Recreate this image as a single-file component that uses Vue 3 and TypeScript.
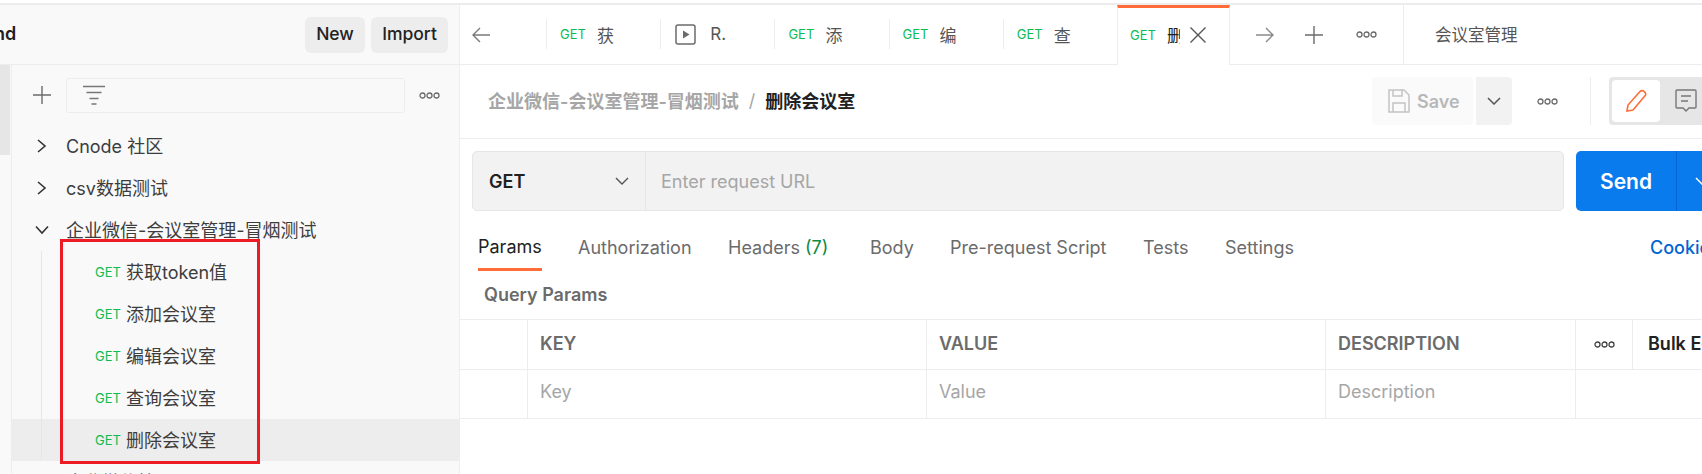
<script setup lang="ts">
interface Tab { label: string; active?: boolean; runner?: boolean }
const tabs: Tab[] = [
  { label: '获' },
  { label: 'R.', runner: true },
  { label: '添' },
  { label: '编' },
  { label: '查' },
  { label: '删', active: true },
]
const collections = ['Cnode 社区', 'csv数据测试']
const requests = ['获取token值', '添加会议室', '编辑会议室', '查询会议室', '删除会议室']
const reqTabs = ['Authorization']
const cols = ['KEY', 'VALUE', 'DESCRIPTION']
const placeholders = ['Key', 'Value', 'Description']
</script>

<template>
  <div class="app">
    <div class="topline"></div>
    <div class="body">
      <aside class="side">
        <header class="side-head">
          <span class="side-title">nd</span>
          <div class="side-btns">
            <button class="btn new">New</button>
            <button class="btn imp">Import</button>
          </div>
        </header>
        <div class="side-main">
          <div class="rail"><div class="rail-item"></div></div>
          <div class="tree-panel">
            <div class="tools">
              <svg class="plus" width="18" height="18" viewBox="0 0 18 18"><path d="M9 0v18M0 9h18" stroke="#6b6b6b" stroke-width="1.4" fill="none"/></svg>
              <div class="filter">
                <svg width="22" height="20" viewBox="0 0 22 20"><path d="M0 1.5h22M3.5 7.5h15M6.5 13.500h9M8.500 19h5" stroke="#777" stroke-width="1.4" fill="none"/></svg>
              </div>
              <svg class="dots" width="21" height="7" viewBox="0 0 21 7"><g fill="none" stroke="#6b6b6b" stroke-width="1.300"><circle cx="3.500" cy="3.500" r="2.500"/><circle cx="10.500" cy="3.500" r="2.500"/><circle cx="17.500" cy="3.500" r="2.500"/></g></svg>
            </div>
            <div v-for="c in collections" :key="c" class="row coll">
              <svg class="chev" width="10" height="14" viewBox="0 0 10 14"><path d="M1 1l7 6-7 6" fill="none" stroke="#333" stroke-width="1.600"/></svg>
              <span>{{ c }}</span>
            </div>
            <div class="row coll open">
              <svg class="chev" width="14" height="10" viewBox="0 0 14 10"><path d="M1 1.500l6 6.500 6-6.500" fill="none" stroke="#333" stroke-width="1.600"/></svg>
              <span>企业微信-会议室管理-冒烟测试</span>
            </div>
            <div v-for="(r, i) in requests" :key="r" class="row req" :class="{ sel: i === 4 }">
              <span class="guide"></span>
              <span class="get">GET</span>
              <span>{{ r }}</span>
            </div>
            <div class="row coll">
              <span>企业微信接口</span>
            </div>
          </div>
        </div>
        <div class="redbox"></div>
      </aside>

      <main class="main">
        <div class="tabbar">
          <svg class="back" width="18" height="16" viewBox="0 0 18 16"><path d="M18 8H1M8 1L1 8l7 7" fill="none" stroke="#7a7a7a" stroke-width="1.400"/></svg>
          <div v-for="t in tabs" :key="t.label" class="tab" :class="{ active: t.active, runner: t.runner }">
            <template v-if="t.runner">
              <svg width="21" height="21" viewBox="0 0 21 21"><rect x="1" y="1" width="19" height="19" rx="2" fill="none" stroke="#6b6b6b" stroke-width="1.500"/><path d="M8 6.500l6.500 4-6.500 4z" fill="#6b6b6b"/></svg>
              <span class="tab-label">{{ t.label }}</span>
            </template>
            <template v-else>
              <span class="tab-get">GET</span>
              <span class="tab-label">{{ t.label }}</span>
              <svg v-if="t.active" class="close" width="16" height="16" viewBox="0 0 16 16"><path d="M.5.5l15 15M15.500.5l-15 15" stroke="#555" stroke-width="1.400" fill="none"/></svg>
            </template>
          </div>
          <div class="tab-tools">
            <svg width="18" height="16" viewBox="0 0 18 16"><path d="M0 8h17M10 1l7 7-7 7" fill="none" stroke="#8a8a8a" stroke-width="1.400"/></svg>
            <svg width="18" height="18" viewBox="0 0 18 18"><path d="M9 0v18M0 9h18" stroke="#6b6b6b" stroke-width="1.400" fill="none"/></svg>
            <svg class="tool-dots" width="21" height="7" viewBox="0 0 21 7"><g fill="none" stroke="#6b6b6b" stroke-width="1.300"><circle cx="3.500" cy="3.500" r="2.500"/><circle cx="10.500" cy="3.500" r="2.500"/><circle cx="17.500" cy="3.500" r="2.500"/></g></svg>
          </div>
          <div class="env">会议室管理</div>
        </div>

        <div class="crumbbar">
          <div class="crumb">
            <span class="crumb-parent">企业微信-会议室管理-冒烟测试</span>
            <span class="crumb-sep">/</span>
            <span class="crumb-cur">删除会议室</span>
          </div>
          <div class="crumb-actions">
            <div class="save">
              <svg width="22" height="24" viewBox="0 0 22 24"><path d="M1 1h15l5 5v17H1zM5 1v6h9V1M5 23v-9h12v9" fill="none" stroke="#c4c4c4" stroke-width="1.500"/></svg>
              <span>Save</span>
            </div>
            <div class="save-drop">
              <svg width="14" height="8" viewBox="0 0 14 8"><path d="M1 1l6 6 6-6" fill="none" stroke="#555" stroke-width="1.500"/></svg>
            </div>
            <svg class="crumb-dots" width="21" height="7" viewBox="0 0 21 7"><g fill="none" stroke="#6b6b6b" stroke-width="1.300"><circle cx="3.500" cy="3.500" r="2.500"/><circle cx="10.500" cy="3.500" r="2.500"/><circle cx="17.500" cy="3.500" r="2.500"/></g></svg>
            <div class="vdiv"></div>
            <div class="toggle">
              <div class="toggle-on">
                <svg width="22" height="24" viewBox="0 0 22 24"><path d="M2 22l1-6L15 2.500c1-1 3-1 4.500.3s1.500 3 .5 4L8 21z" fill="none" stroke="#ff6c37" stroke-width="1.600"/></svg>
              </div>
              <svg class="comment" width="22" height="24" viewBox="0 0 22 24"><path d="M2 1h18a1 1 0 0 1 1 1v16a1 1 0 0 1-1 1h-6l-3 3-3-3H2a1 1 0 0 1-1-1V2a1 1 0 0 1 1-1zM6 7h10M6 12h7" fill="none" stroke="#777" stroke-width="1.400"/></svg>
            </div>
          </div>
        </div>

        <div class="urlrow">
          <div class="urlbox">
            <div class="method">
              <span>GET</span>
              <svg width="14" height="8" viewBox="0 0 14 8"><path d="M1 1l6 6 6-6" fill="none" stroke="#555" stroke-width="1.400"/></svg>
            </div>
            <div class="url">Enter request URL</div>
          </div>
          <div class="send">
            <span class="send-label">Send</span>
            <span class="send-drop">
              <svg width="14" height="8" viewBox="0 0 14 8"><path d="M1 1l6 6 6-6" fill="none" stroke="#fff" stroke-width="1.500"/></svg>
            </span>
          </div>
        </div>

        <nav class="reqtabs">
          <span class="rt on">Params</span>
          <span v-for="t in reqTabs" :key="t" class="rt auth">{{ t }}</span>
          <span class="rt headers">Headers <em>(7)</em></span>
          <span class="rt body-tab">Body</span>
          <span class="rt pre">Pre-request Script</span>
          <span class="rt tests">Tests</span>
          <span class="rt settings">Settings</span>
          <span class="cookies">Cookies</span>
        </nav>

        <div class="qp">Query Params</div>

        <div class="tbl head">
          <div class="cell chk"></div>
          <div v-for="c in cols" :key="c" class="cell" :class="'c-' + c.toLowerCase()"><span class="lift">{{ c }}</span></div>
          <div class="cell more">
            <svg width="21" height="7" viewBox="0 0 21 7"><g fill="none" stroke="#444" stroke-width="1.300"><circle cx="3.500" cy="3.500" r="2.500"/><circle cx="10.500" cy="3.500" r="2.500"/><circle cx="17.500" cy="3.500" r="2.500"/></g></svg>
          </div>
          <div class="cell bulk"><span class="lift">Bulk Edit</span></div>
        </div>
        <div class="tbl rowb">
          <div class="cell chk"></div>
          <div v-for="p in placeholders" :key="p" class="cell" :class="'c-' + p.toLowerCase()"><span class="lift2">{{ p }}</span></div>
        </div>
      </main>
    </div>
  </div>
</template>

<style scoped>
.app {
  width: 1702px;
  height: 474px;
  overflow: hidden;
  background: #fff;
  font-family: Inter, "Noto Sans CJK SC", sans-serif;
  color: #212121;
  font-size: 18px;
}
.topline { height: 5px; background: linear-gradient(#fff 3px, #ececec 3px); }
.body { display: flex; height: 469px; }
.side {
  position: relative;
  width: 460px;
  flex: none;
  background: #f9f9f9;
  border-right: 1px solid #ededed;
  box-sizing: border-box;
}
.side-head {
  height: 60px;
  box-sizing: border-box;
  border-bottom: 1px solid #ededed;
  display: flex;
  align-items: center;
  justify-content: space-between;
}
.side-title { font-weight: 600; margin-left: -6px; font-size: 18px; margin-top: -2px; }
.side-btns { display: flex; gap: 6px; margin-right: 11px; }
.btn {
  border: 0;
  height: 36px;
  border-radius: 6px;
  background: #ededed;
  font: 500 17.500px Inter, sans-serif;
  color: #212121;
  padding: 0 0 2px;
}
.new { width: 60px; }
.imp { width: 77px; }
.side-main { display: flex; height: 409px; overflow: hidden; }
.rail { width: 12px; flex: none; box-sizing: border-box; border-right: 1px solid #ededed; }
.rail-item { height: 90px; width: 10px; background: #e6e6e6; }
.tree-panel { flex: 1; min-width: 0; }
.tools { height: 60px; display: flex; align-items: center; padding-left: 21px; box-sizing: border-box; }
.plus { flex: none; }
.filter {
  margin-left: 15px;
  width: 339px;
  height: 35px;
  box-sizing: border-box;
  border: 1px solid #ededed;
  border-radius: 3px;
  padding-left: 16px;
  display: flex;
  align-items: center;
}
.dots { margin-left: 14px; flex: none; }
.row {
  height: 42px;
  box-sizing: border-box;
  padding-bottom: 3px;
  display: flex;
  align-items: center;
  color: #3d3d3d;
  font-size: 18px;
  white-space: nowrap;
  position: relative;
}
.coll { padding-left: 54px; }
.chev { position: absolute; left: 25px; top: 14px; }
.open .chev { left: 23px; top: 16px; }
.req { padding-left: 83px; }
.guide { position: absolute; left: 29px; top: 0; bottom: 0; width: 1px; background: #e6e6e6; }
.sel { background: #ededed; }
.get { color: #0cbb52; font-size: 13px; width: 31px; flex: none; margin-top: 2px; }
.redbox {
  position: absolute;
  left: 60px;
  top: 234px;
  width: 200px;
  height: 225px;
  box-sizing: border-box;
  border: 3px solid #ed1c24;
}

.main { flex: 1; min-width: 0; overflow: hidden; }
.tabbar {
  height: 60px;
  box-sizing: border-box;
  display: flex;
  align-items: stretch;
  border-bottom: 1px solid #ededed;
  position: relative;
}
.back { margin: 22px 56px 0 12px; flex: none; }
.tab {
  width: 114.200px;
  box-sizing: border-box;
  flex: none;
  display: flex;
  align-items: center;
  padding: 0 0 1px 14px;
  position: relative;
  overflow: hidden;
}
.tab::before {
  content: "";
  position: absolute;
  left: 0;
  top: 14px;
  bottom: 15px;
  width: 1px;
  background: #ededed;
}
.tab.runner { padding-left: 15px; }
.tab-get { color: #0cbb52; font-size: 13px; width: 37px; flex: none; }
.tab-label { color: #555; font-size: 17px; }
.runner .tab-label { margin-left: 14px; }
.tab.active {
  width: 113px;
  height: 60px;
  background: #fff;
  border-top: 3px solid #ff6c37;
  border-left: 1px solid #ededed;
  border-right: 1px solid #ededed;
  padding-left: 12px;
  padding-bottom: 4px;
  margin-bottom: -1px;
  z-index: 1;
}
.tab.active::before { display: none; }
.tab.active .tab-label { color: #212121; width: 13px; overflow: hidden; flex: none; }
.close { margin-left: 10px; flex: none; }
.tab-tools {
  width: 174px;
  flex: none;
  display: flex;
  align-items: center;
  padding-left: 26px;
  gap: 31px;
  box-sizing: border-box;
  border-right: 1px solid #ededed;
}
.tool-dots { margin-left: 2px; }
.env { padding: 0 0 2px 31px; font-size: 16.500px; color: #555; align-self: center; }

.crumbbar {
  height: 74px;
  box-sizing: border-box;
  border-bottom: 1px solid #ededed;
  display: flex;
  align-items: center;
  padding-left: 28px;
  position: relative;
}
.crumb { display: flex; align-items: center; font-weight: 600; font-size: 18px; margin-top: -3px; }
.crumb-parent { color: #a6a6a6; }
.crumb-sep { color: #a6a6a6; margin: 0 10px; font-weight: 400; }
.crumb-cur { color: #212121; }
.crumb-actions {
  margin-left: auto;
  display: flex;
  align-items: center;
  height: 48px;
  margin-top: -1px;
  width: 330px;
  flex: none;
  margin-right: 0;
}
.save {
  width: 101px;
  height: 48px;
  box-sizing: border-box;
  background: #fafafa;
  border-radius: 4px;
  display: flex;
  align-items: center;
  padding-left: 16px;
  gap: 7px;
  color: #b8b8b8;
  font-weight: 600;
  font-size: 18px;
  flex: none;
}
.save-drop {
  width: 36px;
  height: 48px;
  margin-left: 3px;
  background: #f2f2f2;
  border-radius: 0 4px 4px 0;
  display: flex;
  align-items: center;
  justify-content: center;
  flex: none;
}
.crumb-dots { margin-left: 25px; flex: none; }
.vdiv { width: 1px; height: 48px; background: #ededed; margin-left: 32px; flex: none; }
.toggle {
  margin-left: 18px;
  width: 110px;
  height: 48px;
  flex: none;
  background: #e6e6e6;
  border-radius: 4px;
  display: flex;
  align-items: center;
  padding-left: 3px;
  box-sizing: border-box;
}
.toggle-on {
  width: 48px;
  height: 42px;
  border-radius: 4px;
  background: #fff;
  display: flex;
  align-items: center;
  justify-content: center;
  flex: none;
}
.comment { margin-left: 15px; flex: none; }

.urlrow { display: flex; padding: 12px 0 0 12px; height: 60px; box-sizing: content-box; }
.urlbox {
  width: 1092px;
  height: 60px;
  box-sizing: border-box;
  background: #f2f2f2;
  border: 1px solid #e6e6e6;
  border-radius: 5px;
  display: flex;
  flex: none;
}
.method {
  width: 173px;
  box-sizing: border-box;
  border-right: 1px solid #e6e6e6;
  display: flex;
  align-items: center;
  justify-content: space-between;
  padding: 0 16px 0 16px;
  font-weight: 600;
  font-size: 18px;
  flex: none;
}
.url { display: flex; align-items: center; padding-left: 15px; color: #a6a6a6; font-size: 18px; }
.send {
  margin-left: 12px;
  width: 140px;
  flex: none;
  height: 60px;
  background: #097bed;
  border-radius: 5px 0 0 5px;
  color: #fff;
  display: flex;
  font-weight: 600;
  font-size: 21px;
}
.send-label {
  width: 101px;
  box-sizing: border-box;
  padding-left: 24px;
  border-right: 1px solid #0265d2;
  display: flex;
  align-items: center;
  flex: none;
}
.send-drop { display: flex; align-items: center; padding-left: 18px; }

.reqtabs {
  position: relative;
  height: 48px;
  margin-top: 12px;
  display: flex;
  align-items: center;
  font-size: 18px;
  color: #6b6b6b;
  white-space: nowrap;
}
.rt { flex: none; }
.on {
  color: #212121;
  margin-left: 18px;
  width: 64px;
  height: 48px;
  line-height: 47px;
  box-shadow: inset 0 -3px 0 #ff6c37;
}
.auth { margin-left: 36px; width: 114px; }
.headers { margin-left: 36px; width: 106px; }
.headers em { font-style: normal; color: #0e8a3e; margin-left: 0; }
.body-tab { margin-left: 36px; width: 44px; }
.pre { margin-left: 36px; width: 157px; }
.tests { margin-left: 36px; width: 45px; }
.settings { margin-left: 37px; width: 69px; }
.cookies { position: absolute; left: 1190px; color: #0265d2; font-weight: 500; }

.qp {
  height: 48px;
  box-sizing: border-box;
  padding: 0 0 1px 24px;
  display: flex;
  align-items: center;
  font-weight: 600;
  font-size: 18px;
  color: #6b6b6b;
}
.tbl {
  display: flex;
  border-top: 1px solid #ededed;
  height: 50px;
  box-sizing: border-box;
  font-size: 18px;
  white-space: nowrap;
}
.rowb { border-bottom: 1px solid #ededed; height: 50px; color: #a6a6a6; }
.head { color: #6b6b6b; font-weight: 600; }
.cell {
  flex: none;
  box-sizing: border-box;
  display: flex;
  align-items: center;
  padding-left: 12px;
  border-right: 1px solid #ededed;
}
.lift { margin-bottom: 2px; }
.lift2 { margin-bottom: 6px; }
.chk { width: 68px; }
.c-key { width: 399px; }
.c-value { width: 399px; }
.c-description { width: 250px; }
.more { width: 57px; justify-content: center; padding-left: 0; }
.bulk { border-right: 0; color: #212121; padding-left: 15px; }
</style>
